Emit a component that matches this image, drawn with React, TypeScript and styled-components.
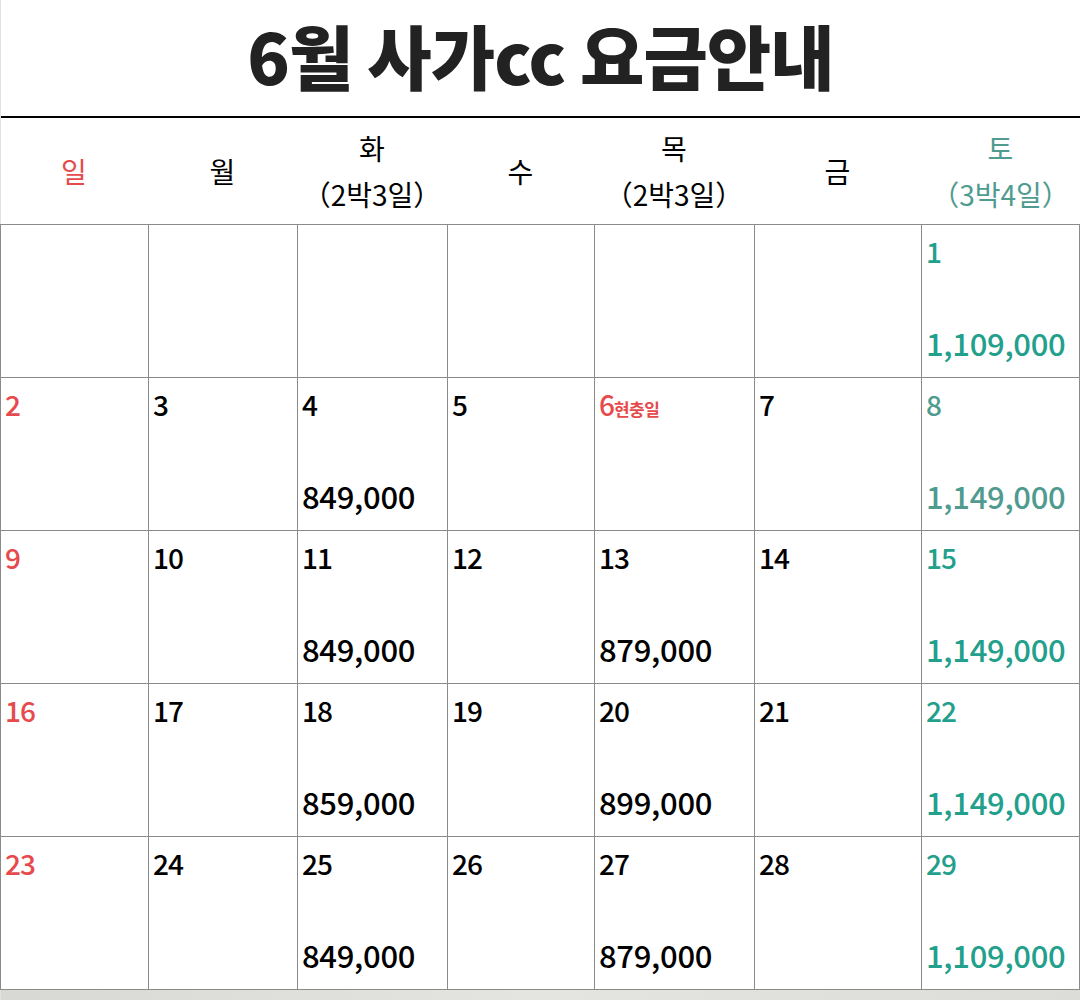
import React from "react";
import styled, { createGlobalStyle } from "styled-components";

const GlobalStyle = createGlobalStyle`
  html, body {
    margin: 0;
    padding: 0;
    background: #ffffff;
  }
  body {
    font-family: "Noto Sans CJK KR", "Noto Sans", sans-serif;
  }
`;

const RED = "#e64a4c";
const TEAL = "#22a08c";
const TEAL_DIM = "#4f9b8f";

type Tone = "sun" | "sat" | "satDim" | "plain";

const toneColor = (t: Tone) =>
  t === "sun" ? RED : t === "sat" ? TEAL : t === "satDim" ? TEAL_DIM : "#000000";

const COLS = "148px 149px 150px 147px 160px 167px 159px";
const CELL_COLS = "147px 148px 149px 146px 159px 166px 157px";

type Day = {
  date?: number;
  price?: string;
  note?: string;
  tone?: Tone;
};

const weeks: Day[][] = [
  [{}, {}, {}, {}, {}, {}, { date: 1, price: "1,109,000", tone: "sat" }],
  [
    { date: 2, tone: "sun" },
    { date: 3 },
    { date: 4, price: "849,000" },
    { date: 5 },
    { date: 6, note: "현충일", tone: "sun" },
    { date: 7 },
    { date: 8, price: "1,149,000", tone: "satDim" },
  ],
  [
    { date: 9, tone: "sun" },
    { date: 10 },
    { date: 11, price: "849,000" },
    { date: 12 },
    { date: 13, price: "879,000" },
    { date: 14 },
    { date: 15, price: "1,149,000", tone: "sat" },
  ],
  [
    { date: 16, tone: "sun" },
    { date: 17 },
    { date: 18, price: "859,000" },
    { date: 19 },
    { date: 20, price: "899,000" },
    { date: 21 },
    { date: 22, price: "1,149,000", tone: "sat" },
  ],
  [
    { date: 23, tone: "sun" },
    { date: 24 },
    { date: 25, price: "849,000" },
    { date: 26 },
    { date: 27, price: "879,000" },
    { date: 28 },
    { date: 29, price: "1,109,000", tone: "sat" },
  ],
];

const heads: { name: string; sub?: string; tone: Tone }[] = [
  { name: "일", tone: "sun" },
  { name: "월", tone: "plain" },
  { name: "화", sub: "（2박3일）", tone: "plain" },
  { name: "수", tone: "plain" },
  { name: "목", sub: "（2박3일）", tone: "plain" },
  { name: "금", tone: "plain" },
  { name: "토", sub: "（3박4일）", tone: "satDim" },
];

export default function App() {
  return (
    <Page>
      <GlobalStyle />
      <TitleBar>
        <Title>6월 사가cc 요금안내</Title>
      </TitleBar>
      <HeadRow>
        {heads.map((h) => (
          <HeadCell key={h.name} $tone={h.tone}>
            <span>{h.name}</span>
            {h.sub && <span>{h.sub}</span>}
          </HeadCell>
        ))}
      </HeadRow>
      <Grid>
        {weeks.flat().map((d, i) => (
          <Cell key={i} $tone={d.tone || "plain"}>
            <DateLine>
              {d.date}
              {d.note && <Note>{d.note}</Note>}
            </DateLine>
            {d.price && <Price>{d.price}</Price>}
          </Cell>
        ))}
      </Grid>
      <Footer />
    </Page>
  );
}

const Page = styled.div`
  width: 1080px;
  border-left: 1px solid #e2e2e2;
  box-sizing: border-box;
`;

const TitleBar = styled.header`
  height: 116px;
  display: flex;
  align-items: center;
  justify-content: center;
  border-bottom: 2px solid #000000;
`;

const Title = styled.h1`
  margin: 0;
  padding-bottom: 6px;
  font-family: "Noto Sans CJK KR", sans-serif;
  font-weight: 900;
  font-size: 70px;
  letter-spacing: -1px;
  color: #222222;
  line-height: 1;
`;

const HeadRow = styled.div`
  display: grid;
  grid-template-columns: ${COLS};
  height: 106px;
  margin-left: -1px;
`;

const HeadCell = styled.div<{ $tone: Tone }>`
  display: flex;
  flex-direction: column;
  align-items: center;
  justify-content: center;
  font-size: 28px;
  line-height: 46px;
  font-weight: 400;
  color: ${(p) => toneColor(p.$tone)};
`;

const Grid = styled.div`
  display: grid;
  grid-template-columns: ${CELL_COLS};
  grid-auto-rows: 152px;
  gap: 1px;
  padding: 1px;
  background: #8a8a8a;
  margin-left: -1px;
  width: 1080px;
  box-sizing: border-box;
`;

const Cell = styled.div<{ $tone: Tone }>`
  background: #ffffff;
  display: flex;
  flex-direction: column;
  justify-content: space-between;
  padding: 8px 4px 15px 4px;
  color: ${(p) => toneColor(p.$tone)};
`;

const DateLine = styled.div`
  font-size: 28px;
  font-weight: 500;
  line-height: 36px;
  letter-spacing: -1px;
`;

const Note = styled.span`
  font-size: 17px;
  font-weight: 700;
  letter-spacing: -0.5px;
`;

const Price = styled.div`
  font-size: 31px;
  font-weight: 500;
  line-height: 38px;
  letter-spacing: -0.3px;
`;

const Footer = styled.div`
  height: 20px;
  background: linear-gradient(90deg, #d8d8d4, #e4e4e0 50%, #dcdcd8);
`;
